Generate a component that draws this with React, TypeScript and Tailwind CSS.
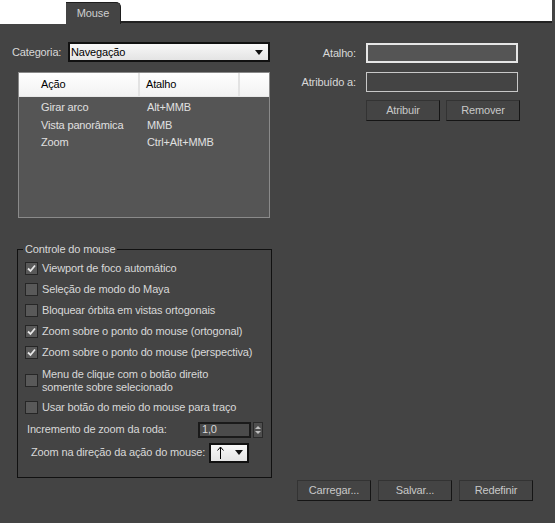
import React from 'react';

const ROWS = [
  { a: 'Girar arco', s: 'Alt+MMB' },
  { a: 'Vista panorâmica', s: 'MMB' },
  { a: 'Zoom', s: 'Ctrl+Alt+MMB' },
];

const CHECKS = [
  { label: 'Viewport de foco automático', on: true },
  { label: 'Seleção de modo do Maya', on: false },
  { label: 'Bloquear órbita em vistas ortogonais', on: false },
  { label: 'Zoom sobre o ponto do mouse (ortogonal)', on: true },
  { label: 'Zoom sobre o ponto do mouse (perspectiva)', on: true },
];

function Check({ on }: { on: boolean }) {
  return (
    <div className="w-[13px] h-[13px] shrink-0 bg-[#595959] border border-[#262626] flex items-center justify-center">
      {on && (
        <svg width="9" height="9" viewBox="0 0 9 9">
          <polyline points="1,4.5 3.5,7 8,1.5" fill="none" stroke="#e8e8e8" strokeWidth="1.8" />
        </svg>
      )}
    </div>
  );
}

function Caret() {
  return (
    <svg width="8" height="5" viewBox="0 0 8 5">
      <polygon points="0,0 8,0 4,5" fill="#111" />
    </svg>
  );
}

function Btn({ children }: { children: React.ReactNode }) {
  return (
    <div className="w-[74px] h-[21px] bg-[#444444] border border-t-[#333] border-l-[#333] border-r-[#151515] border-b-[#151515] flex items-center justify-center text-[#c8c8c8]">
      {children}
    </div>
  );
}

export default function App() {
  return (
    <div className="w-[555px] h-[523px] bg-[#444444] overflow-hidden text-[11px] leading-[13px] tracking-[-0.15px] whitespace-nowrap text-[#d8d8d8] font-['Liberation_Sans',Arial,sans-serif]">
      {/* tab strip */}
      <div className="flex h-[24px]">
        <div className="w-[66px] bg-white" />
        <div className="w-[55px] bg-white pt-[2px]">
          <div className="h-full bg-[#444444] border-t border-r border-[#1e1e1e] rounded-tr-[5px] flex items-center justify-center text-[#cfcfcf] pb-[1px]">
            Mouse
          </div>
        </div>
        <div className="flex-1 h-[23px] bg-white border-b-2 border-[#222]" />
        <div className="w-[3px] h-[23px] bg-[#444444]" />
      </div>

      <div className="flex">
        {/* left column */}
        <div className="w-[272px] shrink-0">
          <div className="flex items-center mt-[18px] pl-[12px] h-[20px]">
            <span className="w-[56px]">Categoria:</span>
            <div className="w-[202px] h-[20px] border-2 border-[#111] bg-gradient-to-b from-[#f8f8f8] to-[#e4e4e4] flex items-center justify-between pl-[1px] pr-[5px] text-black">
              <span>Navegação</span>
              <Caret />
            </div>
          </div>

          <div className="ml-[18px] mt-[10px] w-[252px] h-[146px] border border-[#8a8a8a] bg-[#555555]">
            <div className="h-[24px] flex bg-gradient-to-b from-white to-[#f2f2f2] text-black border-b border-[#e8e8e8]">
              <div className="w-[121px] border-r-2 border-[#e3e3e3] pl-[22px] flex items-center">Ação</div>
              <div className="w-[100px] border-r-2 border-[#e3e3e3] pl-[6px] flex items-center">Atalho</div>
              <div className="flex-1" />
            </div>
            <div className="pt-[2px]">
              {ROWS.map(r => (
                <div key={r.a} className="flex h-[17.5px] items-center text-[#e0e0e0]">
                  <span className="w-[128px] pl-[22px]">{r.a}</span>
                  <span>{r.s}</span>
                </div>
              ))}
            </div>
          </div>

          <div className="relative ml-[17px] mt-[31px] w-[255px] h-[229px] border border-[#111]">
            <span className="absolute left-[5px] top-[-7px] px-[2px] bg-[#444444]">Controle do mouse</span>
            <div className="pl-[7px] pt-[8px]">
              {CHECKS.map(c => (
                <div key={c.label} className="flex items-center gap-[4px] h-[21px]">
                  <Check on={c.on} />
                  <span>{c.label}</span>
                </div>
              ))}
              <div className="flex items-center gap-[4px] h-[33px] mt-[1px]">
                <Check on={false} />
                <span>
                  Menu de clique com o botão direito
                  <br />
                  somente sobre selecionado
                </span>
              </div>
              <div className="flex items-center gap-[4px] h-[21px]">
                <Check on={false} />
                <span>Usar botão do meio do mouse para traço</span>
              </div>
              <div className="flex items-center h-[23px] pl-[2px]">
                <span className="w-[171px] shrink-0">Incremento de zoom da roda:</span>
                <div className="w-[53px] h-[16px] bg-[#4b4b4b] border-2 border-[#1a1a1a] flex items-center pl-[2px] text-[#d8d8d8]">1,0</div>
                <div className="ml-[2px] w-[10px] h-[16px] bg-[#4e4e4e] border border-[#2a2a2a] flex flex-col items-center justify-center gap-[2px]">
                  <svg width="6" height="3" viewBox="0 0 6 3"><polygon points="0,3 6,3 3,0" fill="#bdbdbd" /></svg>
                  <svg width="6" height="3" viewBox="0 0 6 3"><polygon points="0,0 6,0 3,3" fill="#bdbdbd" /></svg>
                </div>
              </div>
              <div className="flex items-center h-[23px] pl-[6px]">
                <span className="w-[178px] shrink-0">Zoom na direção da ação do mouse:</span>
                <div className="w-[40px] h-[20px] border-2 border-[#111] bg-gradient-to-b from-[#f8f8f8] to-[#e4e4e4] flex items-center justify-between pl-[6px] pr-[4px] text-black">
                  <svg width="7" height="13" viewBox="0 0 7 13">
                    <line x1="3.5" y1="1.5" x2="3.5" y2="13" stroke="#000" strokeWidth="1" />
                    <polyline points="0.5,4.5 3.5,1 6.5,4.5" fill="none" stroke="#000" strokeWidth="1" />
                  </svg>
                  <Caret />
                </div>
              </div>
            </div>
          </div>
        </div>

        {/* right column */}
        <div className="flex-1">
          <div className="flex items-center mt-[19px] h-[20px]">
            <span className="w-[84px] text-right">Atalho:</span>
            <div className="ml-[10px] w-[152px] h-[20px] bg-[#555555] border-2 border-[#e6e6e6]" />
          </div>
          <div className="flex items-center mt-[9px] h-[20px]">
            <span className="w-[84px] text-right">Atribuído a:</span>
            <div className="ml-[10px] w-[152px] h-[20px] bg-[#444444] border border-[#c8c8c8]" />
          </div>
          <div className="flex gap-[6px] ml-[94px] mt-[8px]">
            <Btn>Atribuir</Btn>
            <Btn>Remover</Btn>
          </div>
        </div>
      </div>

      <div className="flex justify-end gap-[7px] pr-[22px] mt-[2px]">
        <Btn>Carregar...</Btn>
        <Btn>Salvar...</Btn>
        <Btn>Redefinir</Btn>
      </div>
    </div>
  );
}
